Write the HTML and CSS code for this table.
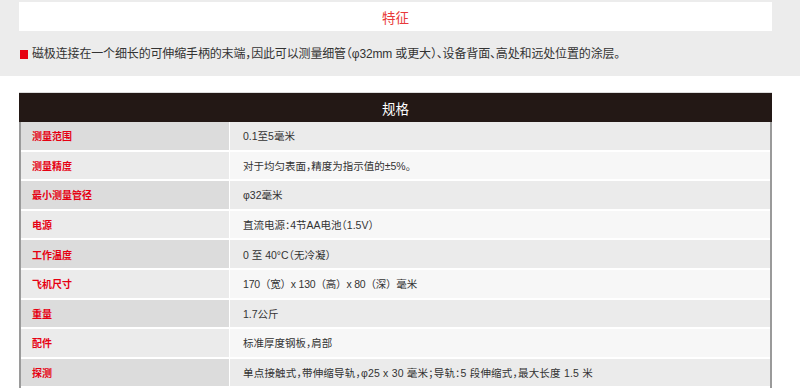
FILE: index.html
```html
<!DOCTYPE html>
<html lang="zh-CN">
<head>
<meta charset="utf-8">
<title>特征 / 规格</title>
<link rel="stylesheet" href="styles.css">
</head>
<body>
<section class="features">
  <div class="feat-title">特征</div>
  <p class="feat-item"><span class="bullet"></span><span>磁极连接在一个细长的可伸缩手柄的末端，因此可以测量细管（φ32mm 或更大）、设备背面、高处和远处位置的涂层。</span></p>
</section>
<section class="spec">
  <div class="spec-head">规格</div>
  <div class="spec-body">
    <div class="row"><div class="k">测量范围</div><div class="v">0.1至5毫米</div></div>
    <div class="row"><div class="k">测量精度</div><div class="v">对于均匀表面，精度为指示值的±5%。</div></div>
    <div class="row"><div class="k">最小测量管径</div><div class="v">φ32毫米</div></div>
    <div class="row"><div class="k">电源</div><div class="v">直流电源：4节AA电池（1.5V）</div></div>
    <div class="row"><div class="k">工作温度</div><div class="v">0 至 40°C（无冷凝）</div></div>
    <div class="row"><div class="k">飞机尺寸</div><div class="v v-full">170（宽）x 130（高）x 80（深）毫米</div></div>
    <div class="row"><div class="k">重量</div><div class="v">1.7公斤</div></div>
    <div class="row"><div class="k">配件</div><div class="v">标准厚度钢板，肩部</div></div>
    <div class="row"><div class="k">探测</div><div class="v v-wide">单点接触式，带伸缩导轨，φ25 x 30 毫米；导轨：5 段伸缩式，最大长度 1.5 米</div></div>
  </div>
</section>
</body>
</html>
```
FILE: styles.css
```css
html, body {
  margin: 0;
  padding: 0;
}
body {
  background: #fff;
  font-family: "Liberation Sans", "Noto Sans CJK SC", sans-serif;
  font-feature-settings: "halt";
  color: #333;
}
.features {
  background: #ececec;
  height: 76px;
  box-sizing: border-box;
  padding: 2px 28px 0 19px;
}
.feat-title {
  background: #fff;
  height: 29px;
  display: flex;
  align-items: center;
  justify-content: center;
  color: #e83a3a;
  font-size: 13.5px;
}
.feat-item {
  margin: 15px 0 0 1px;
  display: flex;
  align-items: center;
  gap: 4px;
  font-size: 12px;
  line-height: 16px;
  letter-spacing: -0.15px;
  color: #333;
}
.bullet {
  width: 8px;
  height: 9px;
  background: #e60012;
  flex: none;
}
.spec {
  margin: 16px 28px 0 19px;
  border-top: 1px solid #dcdcdc;
}
.spec-head {
  background: #231815;
  color: #fff;
  height: 29px;
  display: flex;
  align-items: center;
  justify-content: center;
  font-size: 13.5px;
}
.spec-body {
  border-left: 2px solid #9a9a9a;
  border-right: 2px solid #9a9a9a;
}
.row {
  display: grid;
  grid-template-columns: 208px 1fr;
  column-gap: 1px;
  background: #fff;
  border-bottom: 2px solid #fff;
}
.k, .v {
  height: 27.6px;
  display: flex;
  align-items: center;
}
.k {
  background: #dcdcdc;
  padding-left: 11px;
  color: #e60012;
  font-weight: bold;
  font-size: 10px;
}
.v {
  background: #ebebeb;
  padding-left: 13px;
  font-size: 10.5px;
  color: #333;
}
.v-full {
  font-feature-settings: normal;
  letter-spacing: -0.2px;
}
.v-wide {
  letter-spacing: 0.2px;
}
.row:nth-child(even) .k {
  background: #ebebeb;
}
.row:nth-child(even) .v {
  background: #f7f7f7;
}
```
